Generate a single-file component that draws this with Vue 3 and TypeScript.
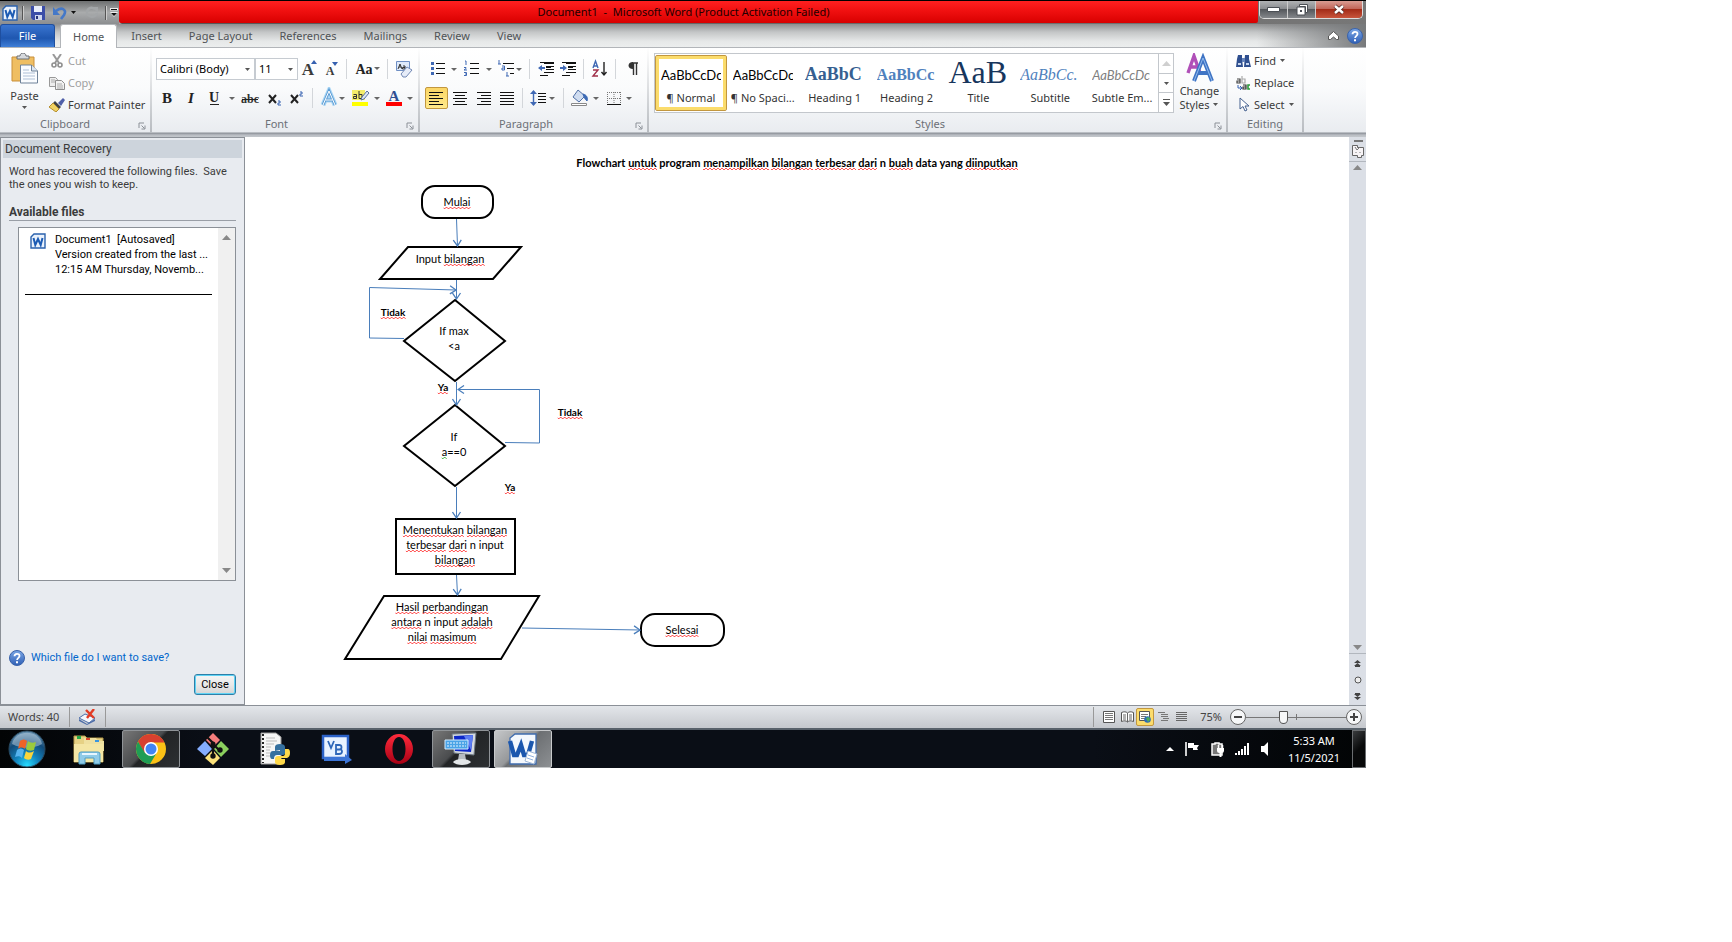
<script setup lang="ts">
import { h, ref } from 'vue'

type Art = [number, number, string]

const arrow = (x: number, y = 11, c = '#666') => `<path d="M${x - 3} ${y - 1}h6l-3 3z" fill="${c}"/>`
const sepLine = (x: number) => `<path d="M${x}.5 1v20" stroke="#d3d6da" fill="none"/>`
const glyph = (t: string, x: number, y: number, size: number, fill: string, extra = '') =>
  `<text x="${x}" y="${y}" font-size="${size}" fill="${fill}" text-anchor="middle" font-family="Liberation Serif, serif" ${extra}>${t}</text>`
const lines = (rows: [number, number, number][], c = '#111', w = 1) =>
  rows.map(([x, y, l]) => `<path d="M${x} ${y}h${l}v${w}h-${l}z" fill="${c}"/>`).join('')
const wordMark =
  '<path d="M1 4L4 1h11v14H1z" fill="#eaf2fc" stroke="#2b62ad" stroke-width="1.4"/><path d="M3.500 5l1.800 7L8 6l2.700 6 1.800-7" fill="none" stroke="#1d5cb4" stroke-width="2"/>'
const helpMark = (id: string) =>
  `<defs><linearGradient id="${id}" x2="0" y2="1"><stop stop-color="#7ba7e6"/><stop offset="1" stop-color="#2f5fb5"/></linearGradient></defs><circle cx="8" cy="8" r="7.500" fill="url(#${id})" stroke="#3a63aa"/><path d="M5.500 6.300C5.500 3 10.500 3 10.500 6c0 1.800-2.400 1.900-2.400 4" fill="none" stroke="#fff" stroke-width="1.800"/><path d="M7 11.300h2v2H7z" fill="#fff"/>`

const art: Record<string, Art> = {
  word: [16, 16, wordMark],
  wordBig: [32, 32,
    '<path d="M3 5L8 1h21v30H3z" fill="#f4f8fd" stroke="#3f6cae" stroke-width="1.300"/><path d="M3 8l4 14h3l4-10 3 10h4l4-14" fill="none" stroke="#1b57ae" stroke-width="4.400"/><path d="M21 18l9 3-3 10-9-3z" fill="#fff" stroke="#9fb6d6"/><path d="M21 22l6 2M20 25l6 2" stroke="#8fb0de"/>'],
  save: [14, 14, '<path d="M0 0h14v14H2l-2-2z" fill="#3b4da8"/><path d="M3 0h8v6H3z" fill="#e9eefb"/><path d="M4 9h7v5H4z" fill="#cfd6ef"/><path d="M5 10h2v3H5z" fill="#26337a"/>'],
  undo: [14, 14, '<path d="M3 5C9 0 14 4 11 9l-3 4" fill="none" stroke="#4478c8" stroke-width="2.600"/><path d="M0 1v8h7z" fill="#4478c8"/>'],
  redo: [14, 14, '<path d="M10 3C4-1 0 6 3 9s8 2 9-2" fill="none" stroke="#a3a6a8" stroke-width="2.400"/><path d="M7 1h6v6z" fill="#a3a6a8"/>'],
  menuArrow: [7, 9, '<path d="M1 3h5L3.500 6z" fill="#111"/>'],
  customize: [8, 9, '<path d="M0 0h8v2.500H0zM0 4h8L4 9z" fill="#eee"/><path d="M1 1h6v1H1zM1 5h6L4 8z" fill="#111"/>'],
  drop: [7, 5, '<path d="M1 1h5L3.500 4z" fill="#555"/>'],
  launcher: [8, 8, '<path d="M1 6V1h5" fill="none" stroke="#8b9097"/><path d="M3.500 3.500l3 3M7 3.500V7H3.500" fill="none" stroke="#8b9097"/>'],
  paste: [28, 32,
    '<path d="M1 4h22v24H1z" fill="#efbe62" stroke="#c98f3a"/><path d="M6 6V3h3c0-4 6-4 6 0h3v3z" fill="#d6d9dd" stroke="#6d7075"/><path d="M9.500 12h11l6 6v12h-17z" fill="#fafcff" stroke="#6f8299"/><path d="M20.500 12v6h6" fill="#dce6f3" stroke="#6f8299"/><path d="M12 17h6M12 20h12M12 23h12M12 26h12" stroke="#aebfd6"/>'],
  cut: [16, 14, '<path d="M4 0l6 9M12 0L6 9" stroke="#999" stroke-width="2" fill="none"/><circle cx="5" cy="11" r="2" fill="none" stroke="#8e8e8e" stroke-width="1.600"/><circle cx="11" cy="11" r="2" fill="none" stroke="#8e8e8e" stroke-width="1.600"/>'],
  copy: [16, 14, '<path d="M.5 1.500h6l2 2v7h-8z" fill="#eee" stroke="#999"/><path d="M6.500 4.500h6l3 3v6h-9z" fill="#f2f2f2" stroke="#8e8e8e"/><path d="M2 4h4M2 6h4M8 8h5M8 10h6M8 12h6" stroke="#aaa"/>'],
  painter: [16, 14, '<path d="M9 5l5-5 2 2-4 6z" fill="#4f5fa8"/><path d="M6 3l6 6-2 2-6-6z" fill="#3f4246"/><path d="M4 5l6 6-3 3-7-5z" fill="#f0d264" stroke="#b58e2e"/>'],
  growFont: [24, 22, glyph('A', 10, 17, 17, '#3b3b3b', 'font-weight="bold"') + '<path d="M13 6h6l-3-4z" fill="#3560b0"/>'],
  shrinkFont: [22, 22, glyph('A', 8, 17, 12, '#3b3b3b', 'font-weight="bold"') + '<path d="M10 4h6l-3 4z" fill="#3560b0"/>'],
  sep: [5, 22, sepLine(2)],
  caseMenu: [36, 22, glyph('Aa', 15, 16, 14, '#222', 'font-weight="bold"') + arrow(28, 10)],
  clearFormat: [28, 22, '<path d="M6.500 3.500h13v9h-13z" fill="#dfeafa" stroke="#6f8fc4"/>' + '<path d="M8 11l2-5 2 5M9 9h2M13 8h2v3h-2.500V9.500H15" fill="none" stroke="#333"/>' + '<path d="M11 16l6-7 5 3-6 7h-3z" fill="#e6ecf8" stroke="#7289b5"/>'],
  bold: [24, 22, glyph('B', 12, 16, 15, '#222', 'font-weight="bold"')],
  italic: [23, 22, glyph('I', 12, 16, 15, '#222', 'font-style="italic" font-weight="bold"')],
  underline: [37, 22, glyph('U', 12, 15, 14, '#222', 'font-weight="bold"') + lines([[8, 17, 9]], '#222') + arrow(30)],
  strike: [24, 22, glyph('abc', 11, 16, 12, '#333', 'font-weight="bold"') + lines([[3, 12, 16]], '#222')],
  subscript: [22, 22, '<path d="M6 8l7 8M13 8l-7 8" stroke="#222" stroke-width="2"/><path d="M15 14h2v2h-2v2h3" fill="none" stroke="#3560b0"/>'],
  superscript: [24, 22, '<path d="M6 8l7 8M13 8l-7 8" stroke="#222" stroke-width="2"/><path d="M15 5h2v2h-2v2h3" fill="none" stroke="#3560b0"/>'],
  sepWide: [7, 22, sepLine(3)],
  effects: [32, 22, '<path d="M7 18l6-14 6 14M9.500 13h7" fill="none" stroke="#a9d6f5" stroke-width="5"/><path d="M7 18l6-14 6 14M9.500 13h7" fill="none" stroke="#5d9cd4" stroke-width="2.800"/><path d="M7 18l6-14 6 14M9.500 13h7" fill="none" stroke="#fff" stroke-width="1"/>' + arrow(26)],
  highlight: [34, 22, '<path d="M4 3h13v10H4z" fill="#f5ee6a"/><path d="M4 15h16v4H4z" fill="#ff0"/>' + '<path d="M5.500 7.500h3v4h-3v-2h3M11 4v7.500h3v-4h-3" fill="none" stroke="#333"/><path d="M13 13l1-3 5-6 2 2-5 6z" fill="#dbe6f6" stroke="#59719b"/>' + arrow(29)],
  fontColor: [34, 22, glyph('A', 12, 14, 15, '#2f4f93', 'font-weight="bold"') + '<path d="M4 15h16v4H4z" fill="#f00"/>' + arrow(28)],
  bullets: [36, 22, '<path d="M6 4h3v3H6zM6 9h3v3H6zM6 14h3v3H6z" fill="#3f68b4"/>' + lines([[11, 5, 9], [11, 10, 9], [11, 15, 9]]) + arrow(29)],
  numbers: [35, 22, '<path d="M4 3h1v4M3 9.500h2v1L3 12h3M3 14.500h2.500v3H3M4 16h1.500" fill="none" stroke="#3f68b4"/>' + lines([[9, 5, 9], [9, 10, 9], [9, 15, 9]]) + arrow(28)],
  multilevel: [31, 22, '<path d="M3 2v4M2 6h3M6 8h2.500v4H6v-2h2M11 14v4M10 18h3" fill="none" stroke="#3f68b4"/>' + lines([[7, 5, 11], [11, 10, 7], [14, 15, 4]]) + arrow(23)],
  outdent: [28, 22, lines([[12, 5, 10], [14, 8, 8], [14, 11, 8], [12, 14, 10], [8, 17, 8]], '#111', 1) + lines([[8, 4, 14], [14, 9, 5]]) + '<path d="M6 10l4-3v2h3v2h-3v2z" fill="#3f68b4"/>'],
  indent: [21, 22, lines([[6, 5, 10], [8, 8, 8], [8, 11, 8], [6, 14, 10], [2, 17, 8]], '#111', 1) + lines([[2, 4, 14], [8, 9, 5]]) + '<path d="M7 10L3 7v2H0v2h3v2z" fill="#3f68b4"/>'],
  sort: [27, 22, '<path d="M7 10l2.500-7L12 10M8 8h3" fill="none" stroke="#3f68b4" stroke-width="1.400"/><path d="M7 12h5l-5 6h5" fill="none" stroke="#a0304a" stroke-width="1.400"/><path d="M18 4v12M15.500 14l2.500 3 2.500-3" fill="none" stroke="#222" stroke-width="1.400"/>'],
  pilcrow: [28, 22, '<path d="M20 5h-6M15.500 5v12M18.500 5v12" fill="none" stroke="#333" stroke-width="1.400"/><path d="M15 4c-6 0-6 7 0 7z" fill="#333"/>'],
  alignLeft: [23, 20, lines([[4, 4, 14], [4, 7, 10], [4, 10, 14], [4, 13, 10], [4, 16, 14]])],
  alignCenter: [24, 22, lines([[4, 5, 14], [6, 8, 10], [4, 11, 14], [6, 14, 10], [4, 17, 14]])],
  alignRight: [24, 22, lines([[4, 5, 14], [8, 8, 10], [4, 11, 14], [8, 14, 10], [4, 17, 14]])],
  justify: [23, 22, lines([[3, 5, 14], [3, 8, 14], [3, 11, 14], [3, 14, 14], [3, 17, 14]])],
  spacing: [36, 22, '<path d="M8.500 4v14" stroke="#3f68b4" stroke-width="1.400"/><path d="M5 7l3.500-4L12 7zM5 15l3.500 4 3.500-4z" fill="#3f68b4"/>' + lines([[13, 6, 8], [13, 9, 8], [13, 12, 8], [13, 15, 8]]) + arrow(27)],
  shading: [36, 22, '<path d="M12 3l7 6-6 6-6-5z" fill="#cfdcf0" stroke="#4e6ea5"/><path d="M17 7c4 1 5 4 4 7-2-2-3-3-4-7z" fill="#3c6ab5" stroke="#3c6ab5"/><path d="M5.500 16.500h15v2h-15z" fill="#fff" stroke="#888"/>' + arrow(30)],
  borders: [36, 22, '<path d="M5.500 5v12M18.500 5v12M12 5v12M5 5.500h14M5 11.500h14" fill="none" stroke="#777" stroke-dasharray="1 1"/><path d="M5 17.500h14" stroke="#111"/>' + arrow(27)],
  changeStyles: [30, 30, '<path d="M3 20l6-17 6 17M5 14h8" fill="none" stroke="#b04fb8" stroke-width="3.400"/><path d="M9 28L18 5l9 23M12 20h12" fill="none" stroke="#3f74c4" stroke-width="4"/><path d="M9 28L18 5l9 23" fill="none" stroke="#8fb9ee" stroke-width="1"/>'],
  find: [15, 14, '<path d="M2 1h4v4l1 8H0l1-8zM9 1h4v4l2 8H8z" fill="#2f4f8f"/><path d="M6 4h3v4H6z" fill="#6885bb"/><path d="M2 9h3v2H2zM10 9h3v2h-3z" fill="#c6d5ee"/>'],
  replace: [15, 14, '<path d="M1 3h3v4H1V5h3" fill="none" stroke="#444" stroke-width="1.200"/><path d="M6 0v7h3V3H6" fill="none" stroke="#aaa" stroke-width="1.200"/><path d="M2 9v3h3M4 10l2 2-2 2" fill="none" stroke="#3560b0"/><path d="M7 9h3v4H7v-2h3" fill="none" stroke="#333" stroke-width="1.200"/><path d="M14 9h-2v4h2" fill="none" stroke="#2a9a3a" stroke-width="1.600"/>'],
  select: [15, 15, '<path d="M4 1v11l3-2.500L9 14l2-1-2-4h4z" fill="#fff" stroke="#44608f"/>'],
  up: [9, 5, '<path d="M0 5l4.500-5L9 5z" fill="#888"/>'],
  down: [9, 5, '<path d="M0 0l4.500 5L9 0z" fill="#888"/>'],
  more: [7, 8, '<path d="M0 0h7v1H0zM0 3h7L3.500 7z" fill="#555"/>'],
  collapse: [11, 9, '<path d="M5.500.500L10.500 5v3.500h-2L5.500 6l-3 2.500h-2V5z" fill="#fff" stroke="#555"/>'],
  help: [16, 16, helpMark('help-a')],
  helpLink: [16, 16, helpMark('help-b')],
  ruler: [14, 18, '<path d="M3 0h9v2H3z" fill="#777"/><path d="M1.500 5.500h5v2h6v8h-2v2h-4v-2h-5z" fill="#f7f4f6" stroke="#666"/><path d="M4 7l2 3 3-3M5 12v1M9 12v1" fill="none" stroke="#777"/>'],
  prevPage: [7, 7, '<path d="M0 3l3.500-3L7 3zM0 6l3.500-3L7 6zM1 6h5v1H1z" fill="#444"/>'],
  browse: [8, 8, '<circle cx="4" cy="4" r="3" fill="#eee" stroke="#555"/>'],
  nextPage: [7, 7, '<path d="M0 1l3.500 3L7 1zM0 4l3.500 3L7 4zM1 0h5v1H1z" fill="#444"/>'],
  proof: [17, 16, '<path d="M0 9l6-4 10 4-6 5z" fill="#f4f7fc" stroke="#4c6da8"/><path d="M0 10l8 5 8-5v2l-8 4-8-4z" fill="#4c6da8"/><path d="M7 1l8 8M15 0L8 9" stroke="#e23b24" stroke-width="2.400"/>'],
  printView: [12, 12, '<path d="M.5.5h11v11H.5z" fill="#fff" stroke="#555"/>' + lines([[2, 2, 8], [2, 4, 8], [2, 6, 8], [2, 8, 8]], '#777')],
  readView: [13, 12, '<path d="M.5 1.500C3 .5 5 .5 6.500 2c1.500-1.500 3.500-1.500 6-.5v9c-2.500-1-4.500-1-6 .5-1.500-1.500-3.500-1.500-6-.5z" fill="#fff" stroke="#555"/><path d="M6.500 2v9M2 4h3M2 6h3M2 8h3M8 4h3M8 6h3M8 8h3" stroke="#666"/>'],
  webView: [12, 12, '<path d="M.5.5h10v9H.5z" fill="#fff" stroke="#555"/>' + lines([[2, 3, 7], [2, 5, 5], [2, 7, 4]], '#777') + '<circle cx="8.500" cy="8.500" r="3.300" fill="#2d6cb5"/><path d="M7 7l3-1 1 3-2 2z" fill="#4fae55"/>'],
  outline: [11, 12, lines([[0, 1, 7], [3, 3, 7], [3, 5, 7], [5, 7, 6], [3, 9, 7]], '#777')],
  draft: [11, 12, lines([[0, 1, 11], [0, 3, 11], [0, 5, 11], [0, 7, 11], [0, 9, 11]], '#666')],
  start: [38, 38,
    '<defs><radialGradient id="orb" cx=".5" cy=".95" r=".95"><stop stop-color="#27dcff"/><stop offset=".35" stop-color="#1283bd"/><stop offset=".7" stop-color="#124a78"/><stop offset="1" stop-color="#6c96b4"/></radialGradient></defs><circle cx="19" cy="19" r="18" fill="url(#orb)" stroke="#294a60"/><path d="M4 14C7-1 31-1 34 14c-9 5-20 5-30 0z" fill="#d2e3ee" opacity=".45"/><path d="M12 11c3-2 5-2 7 0l-2 8c-2-2-5-2-7 0z" fill="#ef6327"/><path d="M20 11c2 2 5 2 8 1l-2 8c-3 1-6 1-8-1z" fill="#9bca3c"/><path d="M9 20c3-2 5-2 7 0l-2 8c-2-2-4-2-7-1z" fill="#55b3ef"/><path d="M18 21c2 2 5 2 8 0l-3 8c-2 1-5 1-7-1z" fill="#fbd53b"/>'],
  explorer: [34, 32,
    '<path d="M2 3h11l2 2h16v24H2z" fill="#e6d184" stroke="#b49a4a"/><path d="M12 5h12l2 3h6v10H12z" fill="#efe0a0"/><path d="M5 3h4v3H5z" fill="#24a84a"/><path d="M14 5h4v2h-4z" fill="#d8452c"/><path d="M23 7h4v2h-4z" fill="#3a96df"/><path d="M2 11h29v18H2z" fill="#f4e6a4"/><path d="M7 31V21q0-2 2-2h17q2 0 2 2v10h-6v-6h-9v6z" fill="#8fcbe8" stroke="#4f9dc4"/><path d="M10 21h15" stroke="#e6f6ff" stroke-width="2"/>'],
  chrome: [32, 32, '<circle cx="16" cy="16" r="15" fill="#fbc116"/><path d="M3 8.500A15 15 0 0 1 29.500 9.500H16L9.500 20z" fill="#d8402f"/><path d="M3 8.500A15 15 0 0 0 15 31l6-10-11-1z" fill="#1f9d55"/><circle cx="16" cy="16" r="7" fill="#fff"/><circle cx="16" cy="16" r="5.500" fill="#4285f4"/>'],
  git: [34, 34, '<path d="M17 1l7 7-7 7-7-7z" fill="#f57d7d"/><path d="M9 9l7 8-7 7-8-7z" fill="#85adff"/><path d="M25 9l8 8-8 8-7-8z" fill="#8bd05e"/><path d="M17 18l7 8-7 7-8-7z" fill="#fbe17a"/><path d="M11 5l6 6v14M17 12l7 7" stroke="#111" stroke-width="2.200" fill="none"/><circle cx="17" cy="12" r="2.500" fill="#111"/><circle cx="17" cy="24" r="2.700" fill="#111"/><circle cx="24" cy="18" r="2.700" fill="#111"/>'],
  python: [32, 34, '<path d="M2 1h15l5 4v27H2z" fill="#f6f6f6" stroke="#999"/><path d="M4 2v29" stroke="#222" stroke-width="2" stroke-dasharray="2 2"/><path d="M7 6h9M7 9h11M7 12h8M7 15h5M7 18h4M7 21h4M7 24h4" stroke="#bbb"/><path d="M16 19v-4q0-3 5-3t5 3v6q0 2-3 2h-5q-3 0-3 4h-2q-2 0-2-4t3-4h7v-1z" fill="#35709f"/><path d="M26 17h3q2 0 2 4t-3 5h-6v1h4v3q0 3-5 3t-5-3v-3q0-3 3-3h5q2 0 2-3z" fill="#ffd94a"/>'],
  vb: [32, 30, '<path d="M2 2h25v22H2z" fill="#e9f2ff" stroke="#2c62c8" stroke-width="2.500"/><path d="M7 7l3 7 3-7M15 11v9h3q3 0 3-2.500T18 15.500h-3 3q2.500 0 2.500-2.300T18 11z" fill="none" stroke="#2e66b8" stroke-width="1.800"/><path d="M3 23h21v-3l7 6-7 4v-3H3z" fill="#3c74d6"/>'],
  opera: [32, 34, '<defs><linearGradient id="op" x2="0" y2="1"><stop stop-color="#ff2b3c"/><stop offset="1" stop-color="#a70014"/></linearGradient></defs><path d="M16 2a14 15 0 1 0 0 30 14 15 0 1 0 0-30zm0 3c4 0 6.500 5 6.500 12S20 29 16 29 9.500 24 9.500 17 12 5 16 5z" fill="url(#op)" fill-rule="evenodd"/>'],
  keyboard: [34, 34, '<path d="M8 2l24-1-2 22-20-2z" fill="#d4d9de" stroke="#6c7680"/><path d="M10 4l19-1-2 17-16-1z" fill="#0c27c8"/><path d="M20 4l9-1-2 15z" fill="#5b7cf2"/><path d="M15 22h6l1 6h-8z" fill="#b7bcc1"/><path d="M9 30c3-4 15-4 18 0-3 4-15 4-18 0z" fill="#e3e6e8"/><path d="M1 8h23v9H1z" fill="#4aa3e6" stroke="#d3ecff"/><path d="M3 11h19M3 14h19" stroke="#e8f5ff" stroke-dasharray="2 1"/>'],
  trayUp: [8, 5, '<path d="M0 4l4-4 4 4z" fill="#fff"/>'],
  flag: [15, 14, '<path d="M1 0v14" stroke="#fff" stroke-width="1.600"/><path d="M3 1h6v2h5l-2 3 1 2H8V6H3z" fill="#fff"/>'],
  battery: [13, 15, '<path d="M4 1h4v1h3v11H1V2h3z" fill="#777" stroke="#fff" stroke-width="1.500"/><path d="M6 6h7v3q0 2-2.500 2v4h-2v-4Q6 11 6 9z" fill="#fff"/><path d="M7.500 3v3M11.500 3v3" stroke="#fff" stroke-width="1.500"/>'],
  signal: [15, 12, '<path d="M0 10h2v2H0zM3 8h2v4H3zM6 6h2v6H6zM9 3h2v9H9zM12 0h2v12h-2z" fill="#fff"/>'],
  speaker: [8, 14, '<path d="M0 4h3l4-4v14L3 10H0z" fill="#fff"/>'],
  minimize: [13, 5, '<path d="M.5.500h12v4H.5z" fill="#fff" stroke="#4b4f55"/>'],
  restore: [12, 12, '<path d="M3.500.500h8v8h-2v-6h-6z" fill="#fff" stroke="#4b4f55"/><path d="M1 3h8v8H1z" fill="#fff" stroke="#4b4f55"/><path d="M4 6h2v2H4z" fill="#4b4f55"/>'],
  close: [12, 11, '<path d="M2 2l8 7M10 2L2 9" stroke="#4e2621" stroke-width="4"/><path d="M2 2l8 7M10 2L2 9" stroke="#fff" stroke-width="2.500"/>'],
}

const Icon = (p: { name: string }) => {
  const [w, ht, inner] = art[p.name]
  return h('svg', { width: w, height: ht, viewBox: `0 0 ${w} ${ht}`, 'aria-hidden': 'true', innerHTML: inner })
}
Icon.props = ['name']

const tabs = ['Insert', 'Page Layout', 'References', 'Mailings', 'Review', 'View']
const fontRow1 = ['growFont', 'shrinkFont', 'sep', 'caseMenu', 'sep', 'clearFormat']
const fontRow2 = ['bold', 'italic', 'underline', 'strike', 'subscript', 'superscript', 'sepWide', 'effects', 'highlight', 'fontColor']
const paraRow1 = ['bullets', 'numbers', 'multilevel', 'sep', 'outdent', 'indent', 'sep', 'sort', 'sep', 'pilcrow']
const paraRow2 = ['alignCenter', 'alignRight', 'justify', 'sep', 'spacing', 'sep', 'shading', 'borders']
const styles = [
  { label: '¶ Normal', sample: 'AaBbCcDc', cls: 'body' },
  { label: '¶ No Spaci...', sample: 'AaBbCcDc', cls: 'body' },
  { label: 'Heading 1', sample: 'AaBbC', cls: 'h1' },
  { label: 'Heading 2', sample: 'AaBbCc', cls: 'h2' },
  { label: 'Title', sample: 'AaB', cls: 'big' },
  { label: 'Subtitle', sample: 'AaBbCc.', cls: 'sub' },
  { label: 'Subtle Em...', sample: 'AaBbCcDc', cls: 'em' },
]
const apps = [
  { icon: 'explorer', label: 'Windows Explorer', state: '' },
  { icon: 'chrome', label: 'Google Chrome', state: 'open' },
  { icon: 'git', label: 'Git', state: '' },
  { icon: 'python', label: 'Python', state: '' },
  { icon: 'vb', label: 'Visual Basic', state: '' },
  { icon: 'opera', label: 'Opera', state: '' },
  { icon: 'keyboard', label: 'On-Screen Keyboard', state: 'open' },
  { icon: 'wordBig', label: 'Microsoft Word', state: 'active' },
]

// A leading * marks a word flagged by the spell checker, ~ one flagged by the grammar checker.
const parse = (line: string) =>
  line.split(' ').map((w) => ({
    text: w.replace(/^[*~]/, ''),
    cls: w[0] === '*' ? 'spell' : w[0] === '~' ? 'grammar' : '',
  }))
const title = parse('Flowchart *untuk program *menampilkan *bilangan *terbesar *dari n *buah data yang *diinputkan')

// Node positions on the drawing canvas: x is the centre, y the top of the first line.
const labels = [
  { x: 117, y: 14, lines: ['*Mulai'] },
  { x: 110, y: 71, lines: ['Input *bilangan'] },
  { x: 114, y: 143, lines: ['If max', '<a'] },
  { x: 53, y: 125, lines: ['*Tidak'], bold: true },
  { x: 103, y: 200, lines: ['*Ya'], bold: true },
  { x: 114, y: 249, lines: ['If', '~a ==0'], tight: true },
  { x: 230, y: 225, lines: ['*Tidak'], bold: true },
  { x: 170, y: 300, lines: ['*Ya'], bold: true },
  { x: 115, y: 342, lines: ['*Menentukan *bilangan', '*terbesar *dari n input', '*bilangan'] },
  { x: 102, y: 419, lines: ['*Hasil *perbandingan', '*antara n input *adalah', '*nilai *masimum'] },
  { x: 342, y: 442, lines: ['*Selesai'] },
].map((l) => ({ ...l, rows: l.lines.map(parse) }))

const zoom = ref(36)
</script>

<template>
  <div class="desktop">
    <header class="titlebar">
      <div class="quick">
        <Icon name="word" /><i class="bar" />
        <button aria-label="Save"><Icon name="save" /></button>
        <button aria-label="Undo"><Icon name="undo" /></button>
        <button aria-label="Undo history" class="history"><Icon name="menuArrow" /></button>
        <button aria-label="Redo" class="redo"><Icon name="redo" /></button>
        <i class="bar" />
        <button aria-label="Customize toolbar"><Icon name="customize" /></button>
      </div>
      <h1 class="caption">Document1&nbsp; -&nbsp; Microsoft Word (Product Activation Failed)</h1>
      <div class="winbtns">
        <button aria-label="Minimize"><Icon name="minimize" /></button>
        <button aria-label="Restore"><Icon name="restore" /></button>
        <button aria-label="Close window" class="x"><Icon name="close" /></button>
      </div>
    </header>

    <nav class="tabs">
      <button class="file">File</button>
      <button class="tab home">Home</button>
      <button v-for="t in tabs" :key="t" class="tab">{{ t }}</button>
      <span class="tabend">
        <button aria-label="Minimize the ribbon"><Icon name="collapse" /></button>
        <button aria-label="Help"><Icon name="help" /></button>
      </span>
    </nav>

    <section class="ribbon">
      <div class="group clipboard">
        <div class="clip">
          <button class="paste"><Icon name="paste" /><span>Paste</span><Icon name="drop" /></button>
          <div class="stack">
            <button class="off"><Icon name="cut" />Cut</button>
            <button class="off"><Icon name="copy" />Copy</button>
            <button><Icon name="painter" />Format Painter</button>
          </div>
        </div>
        <div class="glabel">Clipboard<Icon name="launcher" /></div>
      </div>
      <div class="group font">
        <div class="row">
          <span class="combo face"><select aria-label="Font"><option>Calibri (Body)</option></select><Icon name="drop" /></span>
          <span class="combo size"><select aria-label="Font size"><option>11</option></select><Icon name="drop" /></span>
          <template v-for="(n, i) in fontRow1" :key="i">
            <Icon v-if="n.startsWith('sep')" :name="n" />
            <button v-else :aria-label="n"><Icon :name="n" /></button>
          </template>
        </div>
        <div class="row">
          <template v-for="(n, i) in fontRow2" :key="i">
            <Icon v-if="n.startsWith('sep')" :name="n" />
            <button v-else :aria-label="n"><Icon :name="n" /></button>
          </template>
        </div>
        <div class="glabel">Font<Icon name="launcher" /></div>
      </div>
      <div class="group para">
        <div class="row">
          <template v-for="(n, i) in paraRow1" :key="i">
            <Icon v-if="n.startsWith('sep')" :name="n" />
            <button v-else :aria-label="n"><Icon :name="n" /></button>
          </template>
        </div>
        <div class="row">
          <button class="pressed" aria-label="Align left"><Icon name="alignLeft" /></button>
          <template v-for="(n, i) in paraRow2" :key="i">
            <Icon v-if="n.startsWith('sep')" :name="n" />
            <button v-else :aria-label="n"><Icon :name="n" /></button>
          </template>
        </div>
        <div class="glabel">Paragraph<Icon name="launcher" /></div>
      </div>
      <div class="group styles">
        <div class="stylesrow">
          <div class="gallery">
            <button v-for="(s, i) in styles" :key="s.label" class="style" :class="{ chosen: i === 0 }">
              <span class="sample" :class="s.cls">{{ s.sample }}</span>
              <span class="sname">{{ s.label }}</span>
            </button>
            <div class="gscroll">
              <button aria-label="Previous styles" class="faint"><Icon name="up" /></button>
              <button aria-label="Next styles"><Icon name="drop" /></button>
              <button aria-label="More styles"><Icon name="more" /></button>
            </div>
          </div>
          <button class="change"><Icon name="changeStyles" /><span>Change</span><span>Styles <Icon name="drop" /></span></button>
        </div>
        <div class="glabel">Styles<Icon name="launcher" /></div>
      </div>
      <div class="group editing">
        <div class="stack">
          <button><Icon name="find" />Find <Icon name="drop" /></button>
          <button><Icon name="replace" />Replace</button>
          <button><Icon name="select" />Select <Icon name="drop" /></button>
        </div>
        <div class="glabel">Editing</div>
      </div>
    </section>

    <main class="work">
      <aside class="recovery">
        <h2>Document Recovery</h2>
        <p class="intro">Word has recovered the following files.&nbsp; Save the ones you wish to keep.</p>
        <h3>Available files</h3>
        <div class="files">
          <div class="filelist">
            <button class="entry">
              <Icon name="word" />
              <span class="entrytext">
                <span>Document1&nbsp; [Autosaved]</span>
                <span>Version created from the last ...</span>
                <span>12:15 AM Thursday, Novemb...</span>
              </span>
            </button>
          </div>
          <div class="fscroll"><Icon name="up" /><Icon name="down" /></div>
        </div>
        <a href="#" class="which"><Icon name="helpLink" />Which file do I want to save?</a>
        <button class="closebtn">Close</button>
      </aside>

      <article class="page">
        <p class="doctitle"><template v-for="(w, i) in title" :key="i"><span :class="w.cls">{{ w.text }}</span>{{ ' ' }}</template></p>
        <div class="canvas">
          <svg class="drawing" width="400" height="490" viewBox="340 180 400 490" fill="none">
            <defs>
              <marker id="tip" viewBox="0 0 8 10" refX="7" refY="5" markerWidth="8" markerHeight="10" markerUnits="userSpaceOnUse" orient="auto">
                <path d="M1 1l6 4-6 4" fill="none" stroke="#4a7ebb" stroke-width="1.300" />
              </marker>
            </defs>
            <g stroke="#000" stroke-width="2">
              <rect x="422" y="186" width="71" height="32" rx="13" />
              <path d="M408 247h113l-28 32H380z" />
              <path d="M455 300l50 41-50 40-51-40z" />
              <path d="M455 405l50 41-50 40-51-40z" />
              <path d="M396 519h119v55H396z" />
              <path d="M384 596h155l-38 63H345z" />
              <rect x="641" y="614" width="83" height="32" rx="14" />
            </g>
            <g stroke="#4a7ebb" stroke-width="1" marker-end="url(#tip)">
              <path d="M456.500 219L457.500 246" />
              <path d="M456.500 280v19" />
              <path d="M404 338.500L369.500 338V287.500L456 290" />
              <path d="M456.500 382v23" />
              <path d="M505 442.500L539.500 443V389.500H458" />
              <path d="M456.500 487v31" />
              <path d="M456.500 575L457.500 595" />
              <path d="M522 628L640 630" />
            </g>
          </svg>
          <div
            v-for="(l, i) in labels" :key="i" class="node" :class="{ strong: l.bold, tight: l.tight }"
            :style="{ left: l.x + 'px', top: l.y + 'px' }"
          >
            <div v-for="(r, j) in l.rows" :key="j"><template v-for="(w, k) in r" :key="k"><span :class="w.cls">{{ w.text }}</span>{{ l.tight ? '' : ' ' }}</template></div>
          </div>
        </div>
      </article>

      <div class="vscroll">
        <Icon name="ruler" />
        <i class="rule" />
        <Icon name="up" />
        <span class="track" />
        <Icon name="down" />
        <i class="rule" />
        <button aria-label="Previous page"><Icon name="prevPage" /></button>
        <button aria-label="Browse object"><Icon name="browse" /></button>
        <button aria-label="Next page"><Icon name="nextPage" /></button>
      </div>
    </main>

    <footer class="status">
      <span class="words">Words: 40</span>
      <button aria-label="Proofing errors" class="proof"><Icon name="proof" /></button>
      <div class="views">
        <button aria-label="Print layout"><Icon name="printView" /></button>
        <button aria-label="Full screen reading"><Icon name="readView" /></button>
        <button aria-label="Web layout" class="on"><Icon name="webView" /></button>
        <button aria-label="Outline"><Icon name="outline" /></button>
        <button aria-label="Draft"><Icon name="draft" /></button>
      </div>
      <span class="percent">75%</span>
      <button class="round" aria-label="Zoom out"><i /></button>
      <input v-model="zoom" class="zoom" type="range" min="0" max="100" aria-label="Zoom">
      <button class="round plus" aria-label="Zoom in"><i /></button>
    </footer>

    <footer class="taskbar">
      <button class="orb" aria-label="Start"><Icon name="start" /></button>
      <button v-for="a in apps" :key="a.label" class="app" :class="a.state" :aria-label="a.label"><Icon :name="a.icon" /></button>
      <div class="tray">
        <Icon name="trayUp" /><Icon name="flag" /><Icon name="battery" /><Icon name="signal" /><Icon name="speaker" />
      </div>
      <div class="clock"><span>5:33 AM</span><span>11/5/2021</span></div>
      <button class="peek" aria-label="Show desktop" />
    </footer>
  </div>
</template>

<style>
body { background: #fff; }
</style>

<style scoped>
* { box-sizing: border-box; }
.desktop {
  margin-right: 366px; min-height: calc(100vh - 174px);
  display: flex; flex-direction: column; overflow: hidden;
  font: 11px/14px "Noto Sans", "Open Sans", sans-serif; color: #3b3b3b;
}
button { font: inherit; color: inherit; border: 0; background: none; padding: 0; margin: 0; display: inline-flex; align-items: center; }
svg { display: block; flex: none; }
h1, h2, h3, p { margin: 0; font-weight: normal; }

.titlebar { display: flex; height: 24px; border-top: 1px solid #000; background: linear-gradient(90deg, #999 0, #aaa 120px, #555 122px, #777 100%); }
.quick { width: 119px; flex: none; display: flex; align-items: center; padding-left: 2px; background: linear-gradient(#6d6f70, #a9abac 50%, #8c8e90); }
.bar { width: 2px; height: 14px; border-left: 1px solid #555; background: #ccc; margin: 0 7px 0 4px; }
.quick button + button { margin-left: 8px; }
.quick .history { margin-left: 3px; }
.quick .redo + .bar { margin-left: 6px; margin-right: 3px; }
.caption { flex: 1; font-size: 11px; line-height: 21px; text-align: center; color: #200; background: linear-gradient(#ff2020, #f01010 45%, #d80000); border-radius: 0 0 2px 2px; height: 22px; padding-right: 10px; }
.winbtns { display: flex; width: 104px; height: 18px; margin: 0 3px 0 1px; border: 1px solid #ddd; border-top: 0; border-radius: 0 0 5px 5px; overflow: hidden; }
.winbtns button { width: 28px; justify-content: center; border-right: 1px solid #ccc; background: linear-gradient(#b0b2b4, #8b8d90 45%, #55585c 50%, #84878b); }
.winbtns .x { flex: 1; border: 0; background: linear-gradient(#d99c92, #c2675a 45%, #a32c18 50%, #c8553c); }

.tabs { display: flex; height: 24px; background: linear-gradient(90deg, transparent 92%, #77797b 100%), linear-gradient(#8e8f90, #c4c6c7 35%, #e6e8e8 75%, #eceeee); border-bottom: 1px solid #b2b5b9; }
.file { width: 55px; justify-content: center; color: #fff; border: 1px solid #1f4f9f; border-bottom: 0; border-radius: 3px 3px 0 0; background: linear-gradient(#3a75d0, #1f57b0 60%, #3f7fd8); margin-right: 5px; }
.tab { padding: 0 13px 0 14px; color: #505356; }
.home { background: #fff; border: 1px solid #b2b5b9; border-bottom: 0; border-radius: 3px 3px 0 0; padding: 0 12px; margin-bottom: -1px; }
.tabend { margin-left: auto; display: flex; align-items: center; gap: 8px; padding-right: 3px; }

.ribbon { display: flex; height: 89px; background: linear-gradient(#fff, #fafbfc 45%, #e9ecf0 84px, #8b9097 85px, #b9bdc3 87px, #c3c7cc); padding-bottom: 4px; }
.group { display: flex; flex-direction: column; gap: 7px; border-right: 2px solid #c3c7cc; border-image: linear-gradient(#fff, #b6babf) 1; flex: none; padding-top: 10px; }
.glabel { margin-top: auto; display: flex; align-items: center; justify-content: center; line-height: 14px; color: #6c7077; position: relative; padding: 0 20px 2px 0; }
.glabel svg { position: absolute; right: 4px; bottom: 3px; }
.row { display: flex; height: 22px; }
.clipboard { width: 152px; padding-top: 2px; gap: 0; }
.clip { display: flex; }
.paste { width: 49px; flex-direction: column; padding-top: 3px; }
.paste span { margin: 4px 0 2px; }
.stack { display: flex; flex-direction: column; gap: 1px; }
.stack button { height: 21px; gap: 3px; }
.off { color: #a0a0a0; }
.font { width: 268px; padding-left: 3px; }
.combo { position: relative; border: 1px solid #c6cbd1; background: #fff; display: flex; align-items: center; color: #000; }
.combo svg { position: absolute; right: 3px; pointer-events: none; }
.combo select { appearance: none; border: 0; background: none; font: inherit; color: inherit; width: 100%; padding: 0 3px; height: 20px; }
.face { width: 99px; margin-left: 1px; }
.size { width: 43px; }
.para { width: 229px; padding-left: 5px; }
.pressed { border: 1px solid #c2973f; border-radius: 2px; background: linear-gradient(#fbd666, #ffe98a); margin-right: 1px; width: 23px; justify-content: center; }
.styles { width: 579px; padding: 5px 0 0 5px; gap: 0; }
.stylesrow { display: flex; }
.gallery { display: flex; border: 1px solid #c3c7cc; background: #fff; height: 60px; flex: 1; max-width: 520px; }
.style { flex: 1; min-width: 0; flex-direction: column; padding: 0 5px; margin: 1px 0; border: 1px solid transparent; }
.chosen { border: 1px solid #c2973f; border-radius: 2px; box-shadow: inset 0 0 0 3px #fbdc6c; }
.sample { height: 30px; width: 100%; overflow: hidden; white-space: nowrap; color: #000; text-align: left; font: 13px/38px Lato, sans-serif; }
.sname { margin-top: 5px; white-space: nowrap; color: #333; }
.sample.h1 { font: bold 18px/36px "Liberation Serif", serif; color: #365f91; }
.sample.h2 { font: bold 16px/38px "Liberation Serif", serif; color: #4f81bd; }
.sample.big { font: 32px/32px "Liberation Serif", serif; color: #17365d; }
.sample.sub { font: italic 16px/38px "Liberation Serif", serif; color: #4f81bd; }
.sample.em { font-style: italic; color: #808080; }
.gscroll { width: 15px; flex: none; display: flex; flex-direction: column; border-left: 1px solid #c3c7cc; }
.gscroll button { flex: 1; justify-content: center; }
.gscroll button + button { border-top: 1px solid #c3c7cc; }
.faint { opacity: .4; }
.change { width: 51px; flex: none; flex-direction: column; line-height: 13px; gap: 1px; }
.change span { display: flex; align-items: center; gap: 3px; }
.editing { width: 76px; padding: 2px 0 0 8px; gap: 0; }
.editing .glabel { padding-right: 8px; }

.work { flex: 1; display: flex; background: #fff; border-bottom: 1px solid #8b9097; }
.recovery { width: 245px; flex: none; background: #e8ebf0; border: 1px solid #8b9097; padding: 2px 8px 9px; display: flex; flex-direction: column; font-family: Roboto, "Noto Sans", sans-serif; }
.recovery h2 { font-size: 12px; line-height: 18px; background: #cdd4dc; margin: 0 -6px; padding-left: 2px; }
.intro { line-height: 13px; padding-top: 7px; }
.recovery h3 { font-weight: bold; font-size: 12px; line-height: 15px; margin-top: 14px; border-bottom: 1px solid #999ea6; }
.files { flex: 1; margin: 6px 0 0 9px; background: #fff; border: 1px solid #8b9097; display: flex; max-height: 354px; }
.filelist { flex: 1; padding: 4px 6px; }
.entry { width: 100%; color: #000; gap: 9px; align-items: flex-start; text-align: left; padding: 0 0 17px 5px; border-bottom: 1px solid #000; }
.entry svg { margin-top: 1px; }
.entrytext { display: flex; flex-direction: column; line-height: 15px; white-space: nowrap; }
.fscroll { width: 17px; background: #f0f0f0; display: flex; flex-direction: column; justify-content: space-between; align-items: center; padding: 7px 0; }
.which { margin-top: auto; display: flex; align-items: center; gap: 6px; color: #06c; text-decoration: none; }
.closebtn { margin-top: 8px; align-self: flex-end; width: 42px; height: 21px; justify-content: center; border: 1px solid #2e7fa8; border-radius: 3px; box-shadow: inset 0 0 0 1px #5fd3f5; background: linear-gradient(#f5f5f5, #e9e9e9 50%, #d5d5d5); color: #000; }

.page { flex: 1; min-width: 0; padding-top: 18px; }
.doctitle { text-align: center; font: bold 11px/15px Lato, sans-serif; color: #000; }
.canvas { position: relative; width: 400px; margin: 10px 0 0 95px; }
.node { position: absolute; transform: translateX(-50%); font: 11px/15px Lato, sans-serif; color: #000; white-space: nowrap; text-align: center; }
.strong { font-weight: bold; font-size: 10px; }
.spell, .grammar {
  --c: #f55;
  padding-bottom: 1px;
  background: linear-gradient(90deg, var(--c) 50%, transparent 50%) 0 100% / 4px 1px repeat-x, linear-gradient(90deg, transparent 50%, var(--c) 50%) 0 calc(100% - 1px) / 4px 1px repeat-x;
}
.grammar { --c: #5b5; }
.vscroll { width: 17px; flex: none; background: #dbdfe6; display: flex; flex-direction: column; align-items: center; padding: 3px 0 2px; gap: 3px; }
.rule { width: 100%; height: 1px; background: #b2b7be; }
.track { flex: 1; }
.vscroll button { margin: 3px 0; }

.status { height: 22px; display: flex; align-items: center; background: linear-gradient(#e3e6ea, #c5c8cd); color: #444; padding-right: 4px; }
.words { width: 70px; padding-left: 8px; border-right: 1px solid #999; line-height: 20px; white-space: nowrap; }
.proof { padding: 2px 9px; height: 20px; border-right: 1px solid #999; }
.views { margin-left: auto; display: flex; align-items: center; border-left: 1px solid #999; padding-left: 6px; height: 20px; }
.views button { width: 18px; height: 18px; justify-content: center; border: 1px solid transparent; border-radius: 2px; }
.views .on { background: #fbdc6c; border-color: #c2973f; }
.percent { margin: 0 8px 0 10px; }
.round { width: 16px; height: 16px; border: 1px solid #666; border-radius: 50%; background: #f6f7f8; justify-content: center; }
.round i { width: 8px; height: 2px; background: #444; }
.plus i { background: linear-gradient(#444, #444) 50% / 8px 2px no-repeat, linear-gradient(#444, #444) 50% / 2px 8px no-repeat; height: 8px; }
.zoom { appearance: none; width: 100px; height: 14px; margin: 0; background: linear-gradient(#777, #777) 50% 50% / 1px 6px no-repeat, linear-gradient(#777, #777) 0 50% / 100% 1px no-repeat; }
.zoom::-webkit-slider-thumb { appearance: none; width: 9px; height: 13px; border: 1px solid #555; background: #f6f7f8; border-radius: 1px 1px 5px 5px; }

.taskbar { height: 40px; display: flex; align-items: center; background: linear-gradient(90deg, #020405, #0a0e16 15%, #0a0e16 80%, #020405); border-top: 2px solid #59626b; color: #fff; }
.orb { width: 60px; padding-left: 8px; height: 38px; }
.app { width: 58px; height: 38px; margin-right: 4px; justify-content: center; border: 1px solid transparent; border-radius: 2px; }
.open { border-color: #909498; background: linear-gradient(135deg, #777 0, #4a4c4e 45%, #222426 50%, #2d3032); }
.active { border-color: #c8cacc; background: linear-gradient(135deg, #c5c7c9, #96989a 45%, #6c6f72 50%, #8d9093); }
.tray { margin-left: auto; display: flex; align-items: center; gap: 11px; padding-right: 7px; }
.clock { width: 76px; display: flex; flex-direction: column; align-items: center; line-height: 17px; }
.peek { width: 14px; height: 38px; border: 1px solid #6a6d70; background: linear-gradient(135deg, #3a3c3e, #08090a 50%); }
</style>
